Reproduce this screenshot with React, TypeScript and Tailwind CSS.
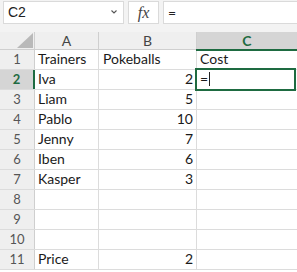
import React from 'react';

const rows: [string, string][] = [
    ["Trainers", "Pokeballs"],
    ["Iva", "2"],
    ["Liam", "5"],
    ["Pablo", "10"],
    ["Jenny", "7"],
    ["Iben", "6"],
    ["Kasper", "3"],
    ["", ""],
    ["", ""],
    ["", ""],
    ["Price", "2"],
];

export default function App() {
    return (
        <div className="w-[297px] h-[272px] overflow-hidden bg-white text-[#1a1a1a] font-['Lato',sans-serif]">
            {/* Formula bar */}
            <div className="h-[32px] bg-[#f3f3f3] flex items-start gap-[4px] pl-[3px] pt-[1px]">
                <div className="w-[121px] h-[23px] bg-white border border-[#dadada] flex items-center justify-between pl-[4px] pr-[5px]">
                    <span className="text-[14px] font-['Liberation_Sans',sans-serif] text-[#222]">C2</span>
                    <svg width="8" height="6" viewBox="0 0 8 6" className="mb-[2px]">
                        <path d="M1.5 1.5 L4 4 L6.5 1.5" fill="none" stroke="#555" strokeWidth="1.1" />
                    </svg>
                </div>
                <div className="w-[31px] h-[23px] bg-white border border-[#dadada] flex items-center justify-center">
                    <span className="text-[16px] italic text-[#444] font-['Liberation_Serif',serif]">fx</span>
                </div>
                <div className="flex-1 h-[23px] bg-white border border-[#dadada] border-r-0 flex items-center pl-[4px]">
                    <span className="text-[14px] text-[#222]">=</span>
                </div>
            </div>

            {/* Column headers */}
            <div className="flex h-[18px] bg-[#efefef] border-b border-[#cfcfcf] text-[14px] text-[#444]">
                <div className="w-[35px] shrink-0 border-r border-[#cfcfcf] flex items-end justify-end pr-[1px] pb-[1px]">
                    <svg width="16" height="15" viewBox="0 0 16 15">
                        <polygon points="16,0 16,15 0,15" fill="#b9b9b9" />
                    </svg>
                </div>
                <div className="w-[64px] shrink-0 border-r border-[#cfcfcf] flex items-center justify-center">A</div>
                <div className="w-[98px] shrink-0 border-r border-[#cfcfcf] flex items-center justify-center">B</div>
                <div className="flex-1 bg-[#d5d5d5] flex items-center justify-center font-bold text-[#1e6b41] relative">
                    C
                    <div className="absolute left-[-1px] right-0 bottom-[-2px] h-[2px] bg-[#1e6b41]" />
                </div>
            </div>

            {/* Grid */}
            {rows.map((r, i) => {
                const sel = i === 1;
                const isText = i === 0;
                return (
                    <div key={i} className="flex h-[20px] border-b border-[#dcdcdc] text-[14px]">
                        <div className={`w-[35px] shrink-0 flex items-center justify-center text-[13px] border-r ${sel ? "bg-[#d5d5d5] font-bold text-[#1e6b41] border-r-2 border-[#1e6b41]" : "bg-[#efefef] text-[#555] border-[#cfcfcf]"}`}>
                            {i + 1}
                        </div>
                        <div className="w-[64px] shrink-0 border-r border-[#dcdcdc] flex items-end pl-[3px] leading-none">
                            <span className="pb-[3px]">{r[0]}</span>
                        </div>
                        <div className={`w-[98px] shrink-0 border-r border-[#dcdcdc] flex items-end leading-none ${isText ? "pl-[4px]" : "justify-end pr-[3px]"}`}>
                            <span className="pb-[3px]">{r[1]}</span>
                        </div>
                        <div className="flex-1 relative flex items-end pl-[3px] leading-none">
                            {isText && <span className="pb-[3px]">Cost</span>}
                            {sel && (
                                <>
                                    <span className="pb-[3px] flex items-end">=<span className="inline-block w-px h-[14px] bg-[#222] ml-[1px]" /></span>
                                    <div className="absolute left-[-2px] right-[1px] top-[-2px] bottom-[-2px] border-2 border-[#1e6b41]" />
                                </>
                            )}
                        </div>
                    </div>
                );
            })}
        </div>
    );
}
